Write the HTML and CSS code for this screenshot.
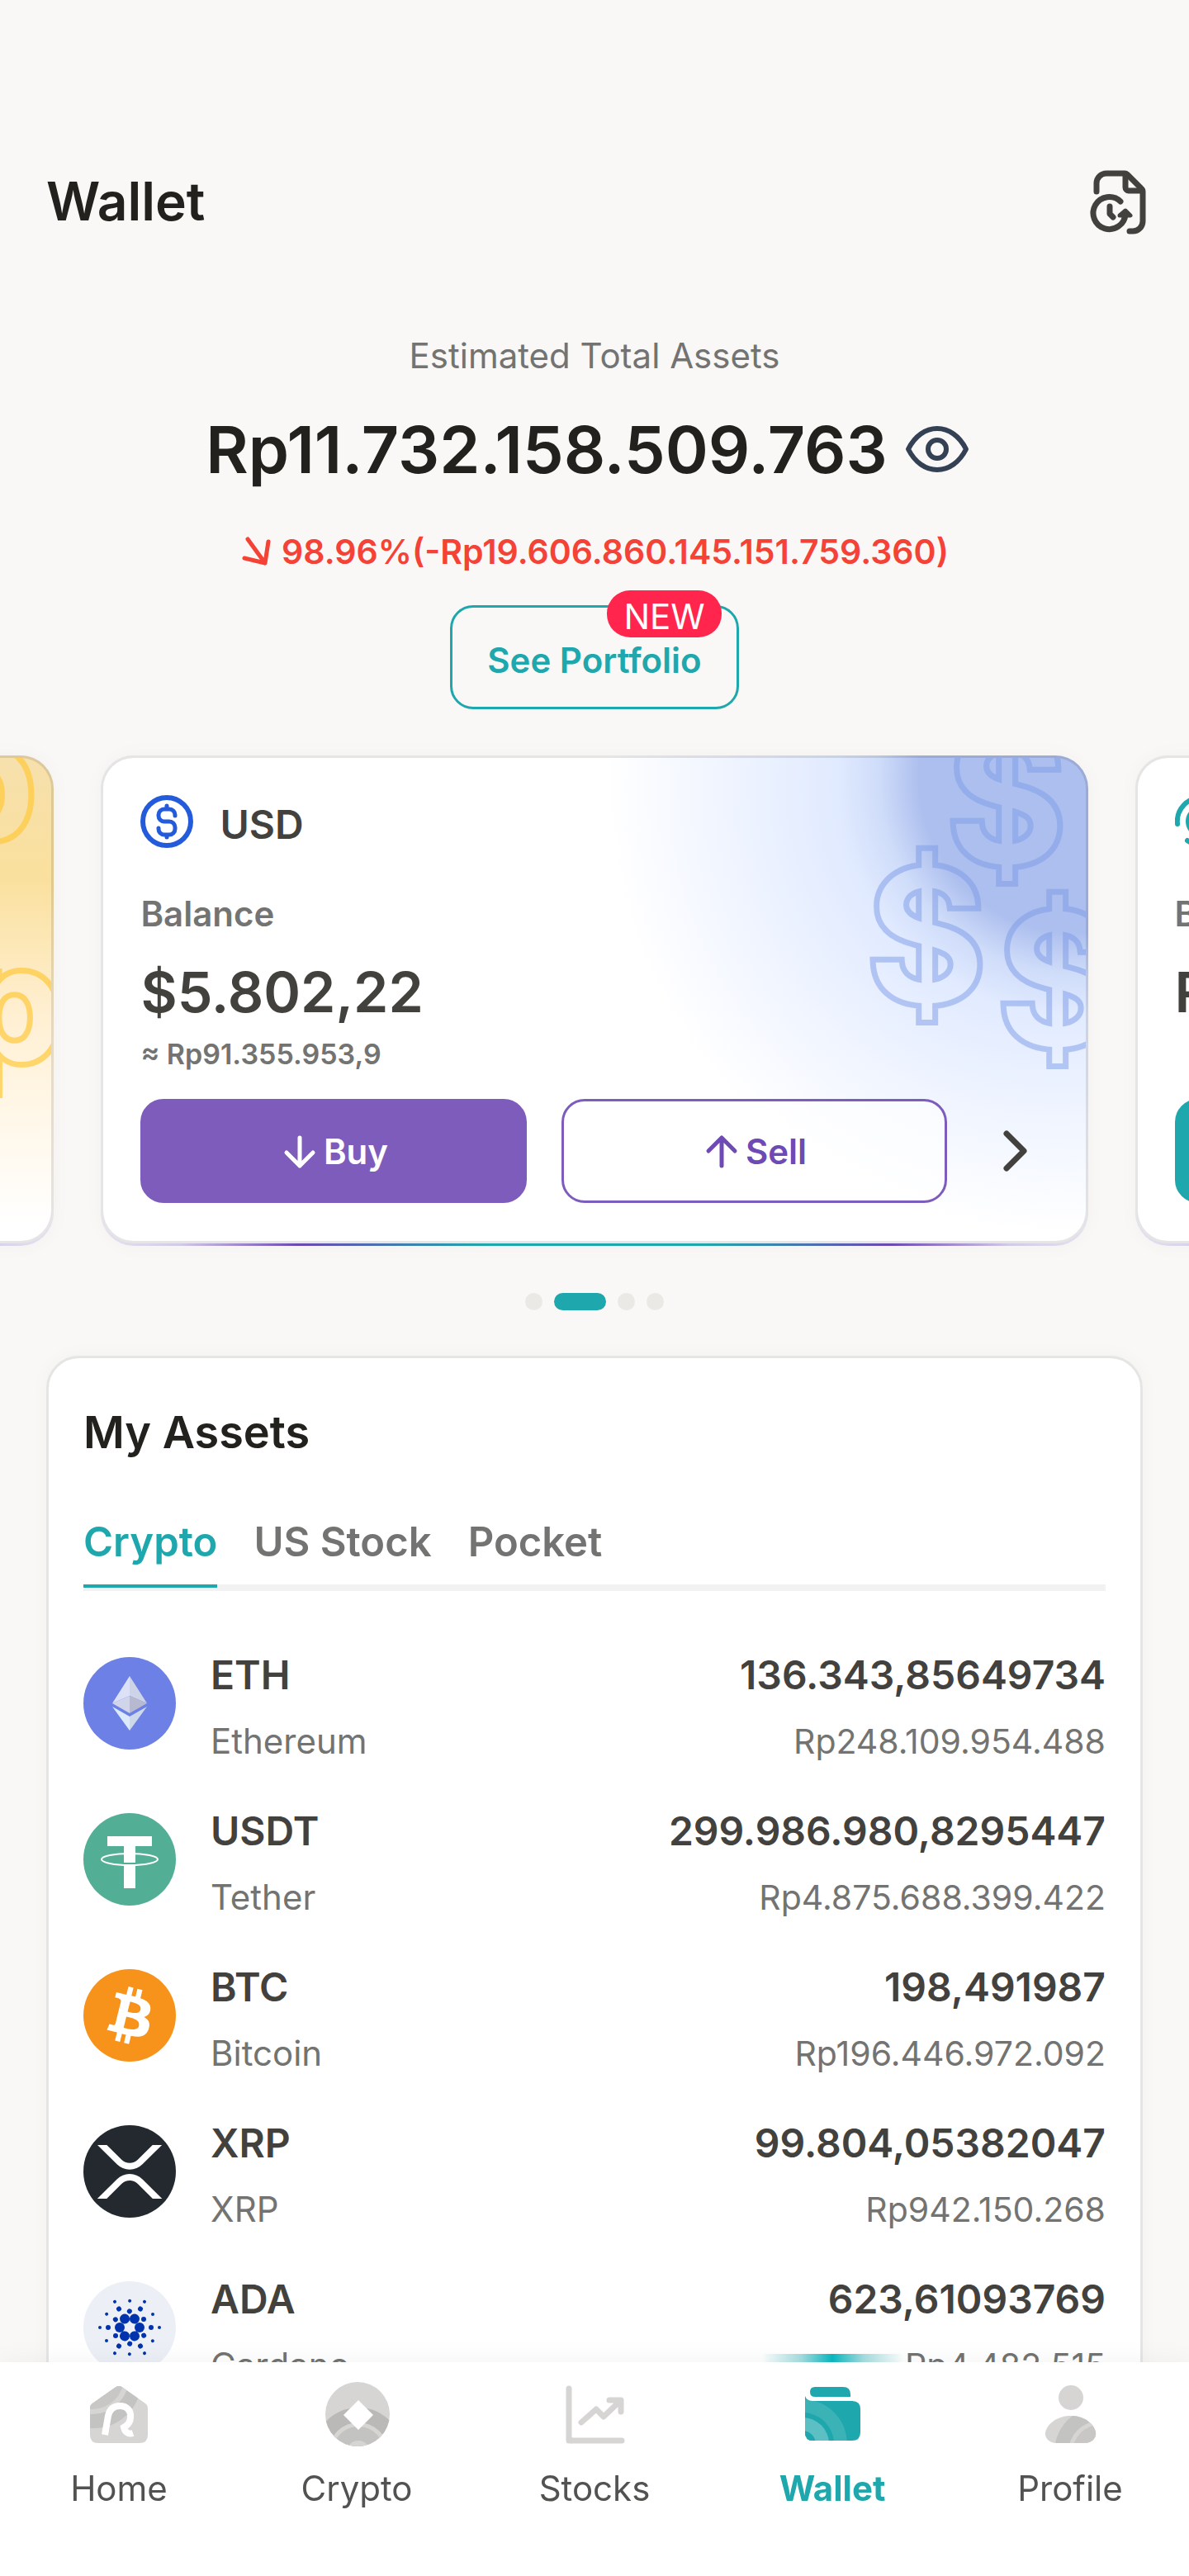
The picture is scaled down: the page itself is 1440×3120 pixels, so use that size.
FILE: index.html
```html
<!DOCTYPE html>
<html lang="en">
<head>
<meta charset="utf-8">
<meta name="viewport" content="width=device-width, initial-scale=1">
<title>Wallet</title>
<link rel="stylesheet" href="styles.css">
</head>
<body>
<svg class="defs" aria-hidden="true">
  <defs>
    <g id="ada-arm" fill="#0033ad">
      <circle cx="68" cy="56" r="6"/>
      <circle cx="73" cy="46" r="3"/>
      <circle cx="82" cy="56" r="3"/>
      <circle cx="84" cy="40" r="2"/>
      <circle cx="92" cy="56" r="2"/>
    </g>
  </defs>
</svg>

<main class="page">
  <header class="topbar">
    <h1 class="topbar-title">Wallet</h1>
    <button class="icon-button" type="button" aria-label="Transaction history">
      <svg width="80" height="80" viewBox="0 0 80 80" fill="none" stroke="#42413d" stroke-width="7" stroke-linecap="round" stroke-linejoin="round">
        <path d="M12 28V18a12 12 0 0 1 12-12H46a4 4 0 0 1 3 1L66 24a5 5 0 0 1 2 4V64a12 12 0 0 1-12 12H52"/>
        <path d="M47 8V23a4 4 0 0 0 4 4H66"/>
        <path d="M41 40A19.500 19.500 0 1 0 47 55"/>
        <path d="M28 46V55L32 59"/>
        <path d="M40 57L47 51L53 57Z" fill="#42413d" stroke-width="5"/>
      </svg>
    </button>
  </header>

  <section class="summary">
    <p class="summary-label">Estimated Total Assets</p>
    <div class="summary-row">
      <p class="summary-total">Rp11.732.158.509.763</p>
      <button class="icon-button eye" type="button" aria-label="Hide balance">
        <svg width="80" height="80" viewBox="0 0 80 80" fill="none" stroke="#344054" stroke-width="6" stroke-linejoin="round">
          <path d="M5 40C13 24 26 15 40 15S67 24 75 40C67 56 54 65 40 65S13 56 5 40Z"/>
          <circle cx="40" cy="40" r="11"/>
        </svg>
      </button>
    </div>
    <p class="summary-change">
      <svg width="40" height="40" viewBox="0 0 40 40" fill="none" stroke="currentColor" stroke-width="5" stroke-linecap="round" stroke-linejoin="round" aria-hidden="true"><path d="M9 5L30 34M5 28L30 34L34 8"/></svg>
      98.96%(-Rp19.606.860.145.151.759.360)
    </p>
    <button class="portfolio" type="button">See Portfolio<span class="badge">NEW</span></button>
  </section>

  <section class="carousel" aria-label="Balances">
    <div class="card-edge">
      <article class="card card-idr" aria-label="Rupiah wallet">
        <svg class="card-art" width="320" height="580" viewBox="0 0 320 580" aria-hidden="true">
          <mask id="rp-line">
            <g class="art-rp" text-anchor="end">
              <text class="art-line" x="300" y="96">Rp</text><text class="art-line" x="334" y="366">Rp</text>
              <text class="art-hole" x="300" y="96">Rp</text><text class="art-hole" x="334" y="366">Rp</text>
            </g>
          </mask>
          <rect width="320" height="580" fill="#ffc93c" opacity=".7" mask="url(#rp-line)"/>
        </svg>
      </article>
    </div>

    <div class="card-edge">
      <article class="card card-usd">
        <svg class="card-art" width="320" height="580" viewBox="0 0 320 580" aria-hidden="true">
          <mask id="usd-line">
            <g class="art-usd" text-anchor="middle">
              <text class="art-line" x="224" y="127">$</text><text class="art-line" x="127" y="295">$</text><text class="art-line" x="285" y="348">$</text>
              <text class="art-hole" x="224" y="127">$</text><text class="art-hole" x="127" y="295">$</text><text class="art-hole" x="285" y="348">$</text>
            </g>
          </mask>
          <rect width="320" height="580" fill="#7c9be8" opacity=".5" mask="url(#usd-line)"/>
        </svg>
        <div class="card-head">
          <svg width="64" height="64" viewBox="0 0 64 64" fill="none" stroke="#245bdb" stroke-width="5" stroke-linecap="round" stroke-linejoin="round" aria-hidden="true">
            <circle cx="32" cy="32" r="29" stroke-width="6"/>
            <path d="M42 25V24a7 7 0 0 0-7-7h-6a7 7 0 0 0-7 7v1a7 7 0 0 0 7 7h6a7 7 0 0 1 7 7v2a7 7 0 0 1-7 7h-6a7 7 0 0 1-7-7v-1M32 13v4M32 48v3"/>
          </svg>
          <h2 class="card-name">USD</h2>
        </div>
        <p class="card-label">Balance</p>
        <p class="card-value">$5.802,22</p>
        <p class="card-approx">≈ Rp91.355.953,9</p>
        <div class="card-actions">
          <button class="action action-buy" type="button">
            <svg width="42" height="42" viewBox="0 0 42 42" fill="none" stroke="currentColor" stroke-width="5" stroke-linecap="round" stroke-linejoin="round" aria-hidden="true"><path d="M21 4V38M5 22L21 38L37 22"/></svg>Buy
          </button>
          <button class="action action-sell" type="button">
            <svg width="42" height="42" viewBox="0 0 42 42" fill="none" stroke="currentColor" stroke-width="5" stroke-linecap="round" stroke-linejoin="round" aria-hidden="true"><path d="M21 38V4M5 20L21 4L37 20"/></svg>Sell
          </button>
          <button class="icon-button more" type="button" aria-label="Open USD wallet">
            <svg width="60" height="60" viewBox="0 0 60 60" fill="none" stroke="#42413d" stroke-width="7" stroke-linecap="round" stroke-linejoin="round"><path d="M20 9L41 30L20 51"/></svg>
          </button>
        </div>
      </article>
    </div>

    <div class="card-edge">
      <article class="card card-pocket">
        <div class="card-head">
          <svg width="64" height="64" viewBox="0 0 64 64" fill="none" stroke="#1ea7ac" stroke-width="6" stroke-linecap="round" aria-hidden="true">
            <path d="M3 35A29 29 0 0 1 32 3"/><circle cx="32" cy="32" r="16"/><path d="M15 55A29 29 0 0 0 61 35"/>
          </svg>
          <h2 class="card-name">Pocket</h2>
        </div>
        <p class="card-label">Balance</p>
        <p class="card-value">Rp0</p>
        <p class="card-approx">&nbsp;</p>
        <div class="card-actions">
          <button class="action action-teal" type="button">Deposit</button>
        </div>
      </article>
    </div>
  </section>

  <div class="dots" aria-hidden="true"><i class="dot"></i><i class="dot dot-on"></i><i class="dot"></i><i class="dot"></i></div>

  <section class="assets">
    <h2 class="assets-title">My Assets</h2>
    <div class="tabs" role="tablist">
      <button class="tab tab-on" type="button" role="tab" aria-selected="true">Crypto</button>
      <button class="tab" type="button" role="tab" aria-selected="false">US Stock</button>
      <button class="tab" type="button" role="tab" aria-selected="false">Pocket</button>
    </div>
    <ul class="coins">
      <li class="coin">
        <svg class="coin-icon" viewBox="0 0 112 112" aria-hidden="true">
          <circle cx="56" cy="56" r="56" fill="#6c80e5"/>
          <path d="M56 23L35 56L56 47Z" fill="#dde1f8"/><path d="M56 23L77 56L56 47Z" fill="#cdd4e8"/>
          <path d="M35 56L56 47V68Z" fill="#d0d5ea"/><path d="M77 56L56 47V68Z" fill="#b7b9d0"/>
          <path d="M35 60L56 72V89Z" fill="#dcebfb"/><path d="M77 60L56 72V89Z" fill="#cdd8ea"/>
        </svg>
        <div class="coin-name"><h3 class="coin-main">ETH</h3><p class="coin-sub">Ethereum</p></div>
        <div class="coin-amount"><p class="coin-main">136.343,85649734</p><p class="coin-sub">Rp248.109.954.488</p></div>
      </li>
      <li class="coin">
        <svg class="coin-icon" viewBox="0 0 112 112" aria-hidden="true">
          <circle cx="56" cy="56" r="56" fill="#52ae94"/>
          <ellipse cx="56" cy="56" rx="34" ry="7" fill="none" stroke="#fff" stroke-width="2"/>
          <path d="M29 28H83V40H63V60H49V40H29ZM49 63H63V91H49Z" fill="#fff"/>
        </svg>
        <div class="coin-name"><h3 class="coin-main">USDT</h3><p class="coin-sub">Tether</p></div>
        <div class="coin-amount"><p class="coin-main">299.986.980,8295447</p><p class="coin-sub">Rp4.875.688.399.422</p></div>
      </li>
      <li class="coin">
        <svg class="coin-icon" viewBox="0 0 32 32" aria-hidden="true">
          <circle cx="16" cy="16" r="16" fill="#f7931a"/>
          <path fill="#fff" d="M23.189 14.02c.314-2.096-1.283-3.223-3.465-3.975l.708-2.84-1.728-.43-.69 2.765c-.454-.114-.92-.22-1.385-.326l.695-2.783L15.596 6l-.708 2.839c-.376-.086-.746-.17-1.104-.26l.002-.009-2.384-.595-.46 1.846s1.283.294 1.256.312c.7.175.826.638.805 1.006l-.806 3.235c.048.012.11.03.18.057l-.183-.045-1.13 4.532c-.086.212-.303.531-.793.41.018.025-1.256-.313-1.256-.313l-.858 1.978 2.25.561c.418.105.828.215 1.231.318l-.715 2.872 1.727.43.708-2.84c.472.127.93.245 1.378.357l-.706 2.828 1.728.43.715-2.866c2.948.558 5.164.333 6.097-2.333.752-2.146-.037-3.385-1.588-4.192 1.13-.26 1.98-1.003 2.207-2.538zm-3.95 5.538c-.533 2.147-4.148.986-5.32.695l.95-3.805c1.172.293 4.929.872 4.37 3.11zm.535-5.569c-.487 1.953-3.495.96-4.47.717l.86-3.45c.975.243 4.118.696 3.61 2.733z"/>
        </svg>
        <div class="coin-name"><h3 class="coin-main">BTC</h3><p class="coin-sub">Bitcoin</p></div>
        <div class="coin-amount"><p class="coin-main">198,491987</p><p class="coin-sub">Rp196.446.972.092</p></div>
      </li>
      <li class="coin">
        <svg class="coin-icon" viewBox="0 0 32 32" aria-hidden="true">
          <circle cx="16" cy="16" r="16" fill="#23292f"/>
          <path fill="#fff" transform="translate(-1.900 -2.100) scale(1.120)" d="M23.07 8h2.89l-6.015 5.957a5.621 5.621 0 01-7.89 0L6.035 8H8.93l4.57 4.523a3.556 3.556 0 004.996 0L23.07 8zM8.895 24.563H6L12.055 18.57a5.621 5.621 0 017.89 0L26 24.563h-2.89l-4.614-4.567a3.556 3.556 0 00-4.997 0l-4.604 4.567z"/>
        </svg>
        <div class="coin-name"><h3 class="coin-main">XRP</h3><p class="coin-sub">XRP</p></div>
        <div class="coin-amount"><p class="coin-main">99.804,05382047</p><p class="coin-sub">Rp942.150.268</p></div>
      </li>
      <li class="coin">
        <svg class="coin-icon" viewBox="0 0 112 112" aria-hidden="true">
          <circle cx="56" cy="56" r="56" fill="#ecf0f6"/>
          <use href="#ada-arm"/><use href="#ada-arm" transform="rotate(60 56 56)"/><use href="#ada-arm" transform="rotate(120 56 56)"/>
          <use href="#ada-arm" transform="rotate(180 56 56)"/><use href="#ada-arm" transform="rotate(240 56 56)"/><use href="#ada-arm" transform="rotate(300 56 56)"/>
        </svg>
        <div class="coin-name"><h3 class="coin-main">ADA</h3><p class="coin-sub">Cardano</p></div>
        <div class="coin-amount"><p class="coin-main">623,61093769</p><p class="coin-sub">Rp4.482.515</p></div>
      </li>
    </ul>
  </section>
</main>

<nav class="tabbar" aria-label="Main">
  <a class="tabbar-item" href="#home">
    <svg width="80" height="80" viewBox="0 0 80 80" aria-hidden="true">
      <clipPath id="house"><path d="M5 33Q5 29 8 27L35 8Q40 4 45 8L72 27Q75 29 75 33V65Q75 75 65 75H15Q5 75 5 65Z"/></clipPath>
      <g clip-path="url(#house)">
        <rect width="80" height="80" fill="#d6d5d3"/>
        <circle cx="10" cy="0" r="57" fill="#c3c3c1"/>
        <circle cx="8" cy="-4" r="44" fill="#d6d5d3"/>
        <circle cx="8" cy="-4" r="38" fill="#c8c7c5"/>
      </g>
      <path d="M23 65L27 42C29 33 34 30 41 30C50 30 55 36 54 44C54 50 51 53 46 56C47 61 51 65 57 63" fill="none" stroke="#fff" stroke-width="8"/>
    </svg>
    <span>Home</span>
  </a>
  <a class="tabbar-item" href="#crypto">
    <svg width="80" height="80" viewBox="0 0 80 80" aria-hidden="true">
      <clipPath id="round"><circle cx="41" cy="40" r="39"/></clipPath>
      <g clip-path="url(#round)">
        <rect width="80" height="80" fill="#d6d5d3"/>
        <circle cx="42" cy="86" r="54" fill="#bab9b7"/>
        <circle cx="42" cy="86" r="36" fill="#d6d5d3"/>
        <circle cx="42" cy="86" r="31" fill="#c3c3c1"/>
        <circle cx="42" cy="86" r="14" fill="#d6d5d3"/>
      </g>
      <path d="M42 23L60 41L42 59L24 41Z" fill="#fff"/>
    </svg>
    <span>Crypto</span>
  </a>
  <a class="tabbar-item" href="#stocks">
    <svg width="80" height="80" viewBox="0 0 80 80" fill="none" stroke="#d6d5d3" stroke-width="7" stroke-linecap="round" stroke-linejoin="round" aria-hidden="true">
      <path d="M9 9V72H73M9 69L12 72M24 50L42 34L51 43L70 25M58 23H72V37"/>
    </svg>
    <span>Stocks</span>
  </a>
  <a class="tabbar-item tabbar-on" href="#wallet" aria-current="page">
    <svg width="80" height="80" viewBox="0 0 80 80" aria-hidden="true">
      <clipPath id="purse"><path d="M7 18Q9 24 16 24H64Q74 24 74 34V62Q74 72 64 72H17Q7 72 7 62Z"/></clipPath>
      <path d="M19 7H53Q62 7 62 16V19H19Q13 19 13 13T19 7Z" fill="#1ea7ac"/>
      <g clip-path="url(#purse)">
        <rect width="80" height="80" fill="#1ea7ac"/>
        <circle cx="4" cy="76" r="54" fill="#3bb2b6"/>
        <circle cx="4" cy="76" r="38" fill="#1ea7ac"/>
        <circle cx="4" cy="76" r="32" fill="#5cbfc3"/>
        <circle cx="4" cy="76" r="16" fill="#1ea7ac"/>
      </g>
    </svg>
    <span>Wallet</span>
  </a>
  <a class="tabbar-item" href="#profile">
    <svg width="80" height="80" viewBox="0 0 80 80" aria-hidden="true">
      <clipPath id="bust"><path d="M24 75C13 75 9 67 10 62C13 50 26 42 41 42S68 50 71 62C72 68 67 75 57 75Z"/></clipPath>
      <circle cx="41" cy="20" r="15" fill="#d6d5d3"/>
      <g clip-path="url(#bust)">
        <rect width="80" height="80" fill="#d6d5d3"/>
        <circle cx="76" cy="86" r="55" fill="#c3c3c1"/>
        <circle cx="76" cy="86" r="38" fill="#d6d5d3"/>
        <circle cx="76" cy="86" r="33" fill="#c8c7c5"/>
      </g>
    </svg>
    <span>Profile</span>
  </a>
</nav>
</body>
</html>
```
FILE: styles.css
```css
:root {
  --ink: #22211d;
  --ink-soft: #42413d;
  --muted: #737371;
  --teal: #1ea7ac;
  --purple: #7d5cbb;
  --paper: #f9f8f6;
}

* { box-sizing: border-box; margin: 0; }

body {
  min-height: 100vh;
  background: var(--paper);
  color: var(--ink);
  font: 400 42px/56px Inter, "Open Sans", sans-serif;
}

button {
  padding: 0;
  border: 0;
  background: none;
  color: inherit;
  font: inherit;
  cursor: pointer;
}

svg { display: block; flex: none; }

.defs { position: absolute; width: 0; height: 0; }

.page { overflow: hidden; }

/* Header */
.topbar {
  display: flex;
  align-items: center;
  justify-content: space-between;
  padding: 204px 44px 0 56px;
}
.topbar-title { font-size: 64px; line-height: 80px; font-weight: 600; }
.icon-button { display: flex; align-items: center; justify-content: center; }

/* Totals */
.summary {
  display: flex;
  flex-direction: column;
  align-items: center;
  padding-top: 119px;
}
.summary-label { color: var(--muted); }
.summary-row { display: flex; align-items: center; margin-top: 31px; }
.summary-total { font-size: 79px; line-height: 108px; font-weight: 600; }
.eye { padding: 0 16px 0 20px; }
.summary-change {
  display: flex;
  align-items: center;
  gap: 10px;
  margin-top: 42px;
  color: #f44336;
  font-size: 41px;
  font-weight: 600;
}
.portfolio {
  position: relative;
  height: 126px;
  margin-top: 37px;
  padding: 8px 42px 0;
  border: 3px solid var(--teal);
  border-radius: 28px;
  color: var(--teal);
  font-weight: 600;
}
.badge {
  position: absolute;
  top: -21px;
  right: 18px;
  padding: 7px 20px 0;
  border-radius: 28px;
  background: #ff254d;
  color: #fff;
  font-weight: 400;
  line-height: 50px;
}

/* Balance cards */
.carousel {
  display: flex;
  justify-content: center;
  gap: 57px;
  margin-top: 56px;
}
.card-edge {
  flex: 0 0 83%;
  padding-bottom: 3px;
  border-radius: 40px;
  background: linear-gradient(90deg, #e6e2f0, #d3cae6 8%, #6b48b3 20%, var(--teal) 39%, var(--teal) 61%, #6b48b3 80%, #d3cae6 92%, #e6e2f0);
  box-shadow: 0 0 24px rgba(0, 0, 0, .03);
}
.card {
  position: relative;
  height: 100%;
  overflow: hidden;
  padding: 45px 45px 46px;
  border: 3px solid rgba(0, 0, 0, .1);
  border-radius: 40px;
  background: #fff border-box;
}
.card-idr { background: linear-gradient(#f6e0ac, #fae09e 25%, #fde9bd 42%, #fff0d4 54%, #fff 96%) border-box; }
.card-usd {
  background:
    radial-gradient(circle at calc(100% - 15px) 25px, #adbfee 190px, rgba(197, 212, 246, .6) 240px, rgba(224, 234, 255, 0) 290px),
    radial-gradient(circle at calc(100% - 38px) 35px, #e0eaff 260px, #fff 545px),
    #fff;
  background-origin: border-box;
}
.card-art { position: absolute; top: 0; right: 0; }
.art-usd { font-size: 220px; font-weight: 600; }
.art-rp { font-size: 190px; font-weight: 700; }
.art-line { fill: none; stroke: #fff; stroke-width: 14px; }
.art-hole { fill: #000; }
.card-head { display: flex; gap: 32px; }
.card-name { color: var(--ink-soft); font-size: 48px; line-height: 72px; font-weight: 600; }
.card-label { margin-top: 44px; color: var(--muted); font-weight: 600; }
.card-value { margin-top: 22px; color: var(--ink-soft); font-size: 68px; line-height: 88px; font-weight: 600; }
.card-approx { margin-top: 8px; color: var(--muted); font-size: 34px; line-height: 48px; font-weight: 600; }
.card-actions { display: flex; gap: 42px; margin-top: 30px; }
.action {
  display: flex;
  flex: 1;
  align-items: center;
  justify-content: center;
  gap: 8px;
  height: 126px;
  padding: 2px 0 0 4px;
  border: 3px solid var(--purple);
  border-radius: 28px;
  font-weight: 600;
}
.action-buy { background: var(--purple); color: #fff; }
.action-sell { background: rgba(255, 255, 255, .6); color: #6e4ab5; }
.action-teal { border-color: var(--teal); background: var(--teal); color: #fff; }
.more { width: 81px; }

.dots { display: flex; justify-content: center; gap: 14px; margin-top: 57px; }
.dot { width: 21px; height: 21px; border-radius: 11px; background: #eae9e6; }
.dot-on { width: 63px; background: var(--teal); }

/* Asset list */
.assets {
  margin: 55px 56px 0;
  padding: 54px 42px 60px;
  border: 3px solid #e5e5e4;
  border-radius: 40px;
  background: #fff;
  box-shadow: 0 0 24px rgba(0, 0, 0, .03);
}
.assets-title { font-size: 54px; line-height: 72px; font-weight: 600; }
.tabs {
  display: flex;
  gap: 44px;
  margin-top: 65px;
  border-bottom: 8px solid #f2f2f2;
}
.tab {
  margin-bottom: -4px;
  padding-bottom: 19px;
  border-bottom: 4px solid transparent;
  color: var(--muted);
  font-size: 49px;
  line-height: 64px;
  font-weight: 600;
}
.tab-on { border-color: var(--teal); color: var(--teal); }
.coins {
  display: flex;
  flex-direction: column;
  gap: 49px;
  margin-top: 70px;
  padding: 0;
  list-style: none;
}
.coin { display: flex; align-items: flex-start; gap: 42px; }
.coin-icon { width: 112px; height: 112px; margin-top: 10px; }
.coin-name { flex: 1; }
.coin-amount { text-align: right; }
.coin-main { color: var(--ink-soft); font-size: 48px; line-height: 64px; font-weight: 600; }
.coin-sub { margin-top: 20px; color: var(--muted); }
.coin-amount .coin-sub { font-size: 41px; }

/* Bottom navigation */
.tabbar {
  position: fixed;
  right: 0;
  bottom: 0;
  left: 0;
  display: flex;
  background: #fff;
  box-shadow: 0 0 32px rgba(0, 0, 0, .05);
}
.tabbar-item {
  position: relative;
  display: flex;
  flex: 1;
  flex-direction: column;
  align-items: center;
  gap: 22px;
  padding: 23px 0 78px;
  color: #525250;
  text-decoration: none;
}
.tabbar-on { color: var(--teal); font-weight: 700; }
.tabbar-on::before {
  content: "";
  position: absolute;
  top: -10px;
  left: 20%;
  width: 60%;
  height: 10px;
  background: linear-gradient(90deg, rgba(30, 167, 172, 0), rgba(30, 167, 172, .4) 28%, #08b5bd 50%, rgba(30, 167, 172, .4) 72%, rgba(30, 167, 172, 0));
}
```
